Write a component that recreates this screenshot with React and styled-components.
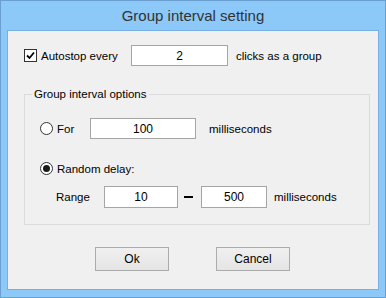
import React from "react";
import styled, { createGlobalStyle } from "styled-components";

const Global = createGlobalStyle`
  html, body {
    margin: 0;
    padding: 0;
    background: #8cc8f8;
  }
  body {
    font-family: "Liberation Sans", Arial, sans-serif;
    font-size: 11.5px;
    color: #000;
  }
`;

const Window = styled.div`
  width: 386px;
  height: 298px;
  box-sizing: border-box;
  border: 1px solid #6a9fd0;
  background: #8cc8f8;
  display: flex;
  flex-direction: column;
`;

const TitleBar = styled.div`
  height: 29px;
  display: flex;
  align-items: center;
  justify-content: center;
  font-size: 15px;
  color: #333;
  padding-bottom: 1px;
  box-sizing: border-box;
`;

const Client = styled.div`
  margin: 0 6px;
  height: 260px;
  box-sizing: border-box;
  border: 1px solid #78afe2;
  background: #f0f0f0;
  padding: 14px 0 0 16px;
  display: flex;
  flex-direction: column;
`;

const Row = styled.div`
  display: flex;
  align-items: center;
  height: ${p => p.$h || 20}px;
  margin-top: ${p => p.$mt || 0}px;
  padding-left: ${p => p.$pl || 0}px;
`;

const Choice = styled.label`
  display: flex;
  align-items: center;
  gap: 4px;
  width: ${p => p.$w}px;
  flex: none;
`;

const Box = styled.span`
  width: 13px;
  height: 13px;
  box-sizing: border-box;
  border: 1px solid #333;
  background: #fff;
  display: flex;
  align-items: center;
  justify-content: center;
  border-radius: ${p => (p.$round ? "50%" : "0")};
`;

const Dot = styled.span`
  width: 7px;
  height: 7px;
  border-radius: 50%;
  background: #1a1a1a;
`;

const TextBox = styled.input`
  width: ${p => p.$w}px;
  height: ${p => p.$h || 20}px;
  box-sizing: border-box;
  border: 1px solid #a5a5a5;
  background: #fff;
  font: inherit;
  font-size: 12px;
  text-align: center;
  color: #000;
  padding: 0;
  margin: 0;
  outline: none;
  flex: none;
`;

const Caption = styled.span`
  margin-left: ${p => p.$ml || 8}px;
  white-space: nowrap;
`;

const Group = styled.div`
  position: relative;
  margin-top: 28px;
  width: 346px;
  height: 131px;
  box-sizing: border-box;
  border: 1px solid #dcdcdc;
  display: flex;
  flex-direction: column;
  padding: 23px 0 0 15px;
`;

const Legend = styled.span`
  position: absolute;
  top: -8px;
  left: 7px;
  padding: 0 2px;
  background: #f0f0f0;
  line-height: 14px;
`;

const Label = styled.span`
  width: ${p => p.$w}px;
  flex: none;
`;

const Dash = styled.span`
  width: 9px;
  height: 2px;
  background: #000;
  margin: 0 8px 0 6px;
  flex: none;
`;

const Buttons = styled.div`
  display: flex;
  gap: 47px;
  margin-top: 22px;
  padding-left: 71px;
`;

const Button = styled.button`
  width: 74px;
  height: 24px;
  box-sizing: border-box;
  border: 1px solid #acacac;
  background: linear-gradient(#f0f0f0, #e5e5e5);
  font: inherit;
  font-size: 12px;
  color: #000;
  padding: 0;
`;

function Check() {
  return (
    <Box>
      <svg width="9" height="9" viewBox="0 0 9 9">
        <path d="M1 4.5 L3.5 7 L8 1.5" fill="none" stroke="#000" strokeWidth="1.8" />
      </svg>
    </Box>
  );
}

function Radio({ on }) {
  return <Box $round>{on ? <Dot /> : null}</Box>;
}

export default function App() {
  return (
    <>
      <Global />
      <Window>
        <TitleBar>Group interval setting</TitleBar>
        <Client>
          <Row $h={21}>
            <Choice $w={107}>
              <Check />
              Autostop every
            </Choice>
            <TextBox $w={97} $h={21} readOnly value="2" />
            <Caption>clicks as a group</Caption>
          </Row>
          <Group>
            <Legend>Group interval options</Legend>
            <Row $h={21}>
              <Choice $w={50}>
                <Radio />
                For
              </Choice>
              <TextBox $w={106} $h={21} readOnly value="100" />
              <Caption $ml={13}>milliseconds</Caption>
            </Row>
            <Row $h={21} $mt={19}>
              <Choice $w={150}>
                <Radio on />
                Random delay:
              </Choice>
            </Row>
            <Row $h={22} $mt={7} $pl={16}>
              <Label $w={48}>Range</Label>
              <TextBox $w={74} $h={22} readOnly value="10" />
              <Dash />
              <TextBox $w={66} $h={22} readOnly value="500" />
              <Caption $ml={7}>milliseconds</Caption>
            </Row>
          </Group>
          <Buttons>
            <Button>Ok</Button>
            <Button>Cancel</Button>
          </Buttons>
        </Client>
      </Window>
    </>
  );
}
